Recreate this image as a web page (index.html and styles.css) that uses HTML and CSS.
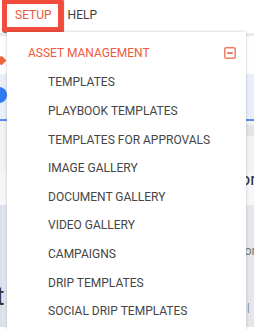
FILE: index.html
```html
<!DOCTYPE html>
<html>
<head>
<meta charset="utf-8">
<link rel="stylesheet" href="styles.css">
</head>
<body>
  <header class="topbar">
    <nav class="nav">
      <span class="nav-item nav-item--active">SETUP</span>
      <span class="nav-item">HELP</span>
    </nav>
    <div class="highlight"></div>
  </header>

  <main class="page">
    <div class="band band--toolbar">
      <span class="band-right band-right--gray"></span>
    </div>
    <div class="band band--white">
      <span class="orange-mark"></span>
    </div>
    <div class="band band--blue">
      <span class="blue-dot"></span>
    </div>
    <div class="band band--light">
      <span class="band-right band-right--gray2"></span>
    </div>
    <div class="band band--content">
      <span class="glyph glyph--r1">or</span>
    </div>
    <div class="band band--lower">
      <span class="glyph glyph--r2">or</span>
      <span class="glyph glyph--t">t</span>
      <span class="glyph glyph--l">l</span>
    </div>
  </main>

  <div class="dropdown">
    <div class="dropdown-head">
      <span class="dropdown-title">ASSET MANAGEMENT</span>
      <svg class="collapse-icon" width="12" height="12" viewBox="0 0 12 12">
        <rect x="0.75" y="0.75" width="10.5" height="10.5" rx="1.5" fill="none" stroke="#f37a63" stroke-width="1.5"/>
        <line x1="3.2" y1="6" x2="8.8" y2="6" stroke="#f04e35" stroke-width="1.5"/>
      </svg>
    </div>
    <ul class="dropdown-list">
      <li class="dropdown-item">TEMPLATES</li>
      <li class="dropdown-item">PLAYBOOK TEMPLATES</li>
      <li class="dropdown-item">TEMPLATES FOR APPROVALS</li>
      <li class="dropdown-item">IMAGE GALLERY</li>
      <li class="dropdown-item">DOCUMENT GALLERY</li>
      <li class="dropdown-item">VIDEO GALLERY</li>
      <li class="dropdown-item">CAMPAIGNS</li>
      <li class="dropdown-item">DRIP TEMPLATES</li>
      <li class="dropdown-item">SOCIAL DRIP TEMPLATES</li>
    </ul>
  </div>
</body>
</html>
```

FILE: styles.css
```css
* { box-sizing: border-box; }

html, body {
  margin: 0;
  padding: 0;
  width: 254px;
  height: 329px;
  overflow: hidden;
  background: #ffffff;
  font-family: Roboto, "Liberation Sans", sans-serif;
}

.topbar {
  position: relative;
  height: 33px;
  background: #ffffff;
}

.nav {
  display: flex;
  gap: 16px;
  padding: 8px 0 0 15px;
  font-size: 12px;
  line-height: 14px;
}

.nav-item { color: #3d3d3d; }
.nav-item--active { color: #f0553c; }

.highlight {
  position: absolute;
  left: 2px;
  top: -1px;
  width: 61px;
  height: 33px;
  border: 5px solid #f24c3d;
  border-radius: 1px;
  box-shadow: 1px 1px 1px rgba(0, 0, 0, 0.55);
}

.page {
  display: flex;
  flex-direction: column;
}

.band {
  position: relative;
  overflow: hidden;
}

.band--toolbar {
  height: 3px;
  background: #e8e8e8;
}
.band-right {
  position: absolute;
  right: 0;
  top: 0;
  width: 8px;
}
.band-right--gray {
  height: 10px;
  background: #ebebeb;
}

.band--white {
  height: 38px;
  background: #ffffff;
}
.orange-mark {
  position: absolute;
  left: -2px;
  top: 21px;
  width: 7px;
  height: 7px;
  background: #f0643c;
  transform: rotate(45deg);
  border-radius: 1px;
}

.band--blue {
  height: 47px;
  background: #e9eef9;
  border-bottom: 2px solid #5b8df0;
}
.blue-dot {
  position: absolute;
  left: -9px;
  top: 13px;
  width: 16px;
  height: 16px;
  border-radius: 50%;
  background: #2f7bf0;
}

.band--light {
  height: 50px;
  background: #f1f2f4;
}
.band-right--gray2 {
  top: 4px;
  height: 11px;
  background: #e4e5e8;
}

.band--content {
  height: 34px;
  background: #f6f7f9;
}

.band--lower {
  height: 122px;
  background: linear-gradient(90deg, #d9dfea 0, #e4e8f0 7px, #e6e7eb 100%);
}

.glyph {
  position: absolute;
  color: #2b2b2b;
  font-family: Roboto, "Liberation Sans", sans-serif;
}
.glyph--r1 {
  right: -2px;
  top: -2px;
  font-size: 17px;
}
.glyph--r2 {
  right: -2px;
  top: 38px;
  font-size: 13px;
  color: #777;
}
.glyph--t {
  left: -4px;
  top: 76px;
  font-size: 26px;
  line-height: 30px;
  color: #333;
}
.glyph--l {
  right: 4px;
  top: 96px;
  font-size: 13px;
  color: #8aa0c0;
}

.dropdown {
  position: absolute;
  left: 7px;
  top: 32px;
  width: 239px;
  height: 300px;
  background: #ffffff;
  box-shadow: 0 0 3px rgba(0, 0, 0, 0.22);
  padding-top: 6px;
  font-size: 12px;
}

.dropdown-head {
  display: flex;
  align-items: center;
  justify-content: space-between;
  height: 30.4px;
  line-height: 30px;
  padding: 0 10px 0 21px;
}

.dropdown-title {
  color: #f15a3b;
}

.collapse-icon {
  display: block;
  margin-top: -1px;
}

.dropdown-list {
  list-style: none;
  margin: 0;
  padding: 0;
}

.dropdown-item {
  height: 28.6px;
  line-height: 28.6px;
  padding-left: 41px;
  color: #454545;
}
```
